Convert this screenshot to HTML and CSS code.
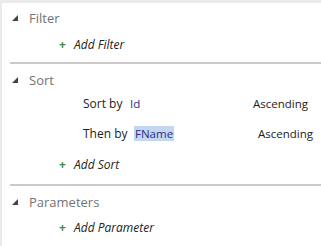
FILE: index.html
```html
<!DOCTYPE html>
<html>
<head>
<meta charset="utf-8">
<link rel="stylesheet" href="styles.css">
</head>
<body>
<div class="panel">
  <section class="section filter">
    <div class="header"><span class="tri"></span><span class="title">Filter</span></div>
    <div class="add"><span class="plus">+</span><span class="addtext">Add Filter</span></div>
  </section>
  <section class="section sort">
    <div class="header"><span class="tri"></span><span class="title">Sort</span></div>
    <div class="sortrow first"><span class="label">Sort by</span><span class="field">Id</span><span class="dir">Ascending</span></div>
    <div class="sortrow second"><span class="label">Then by</span><span class="field sel">FName</span><span class="dir">Ascending</span></div>
    <div class="add"><span class="plus">+</span><span class="addtext">Add Sort</span></div>
  </section>
  <section class="section params">
    <div class="header"><span class="tri"></span><span class="title">Parameters</span></div>
    <div class="add"><span class="plus">+</span><span class="addtext">Add Parameter</span></div>
  </section>
</div>
</body>
</html>
```
FILE: styles.css
```css
html, body {
  margin: 0;
  padding: 0;
  background: #ebebeb;
  width: 321px;
  height: 246px;
  overflow: hidden;
}
body {
  font-family: "Open Sans", "Noto Sans", sans-serif;
  color: #1e1e1e;
}
.panel {
  margin: 3px 0 0 2px;
  background: #fff;
  height: 243px;
}
.section {
  margin-left: 8px;
  border-bottom: 2px solid #cacaca;
}
.section.params { border-bottom: none; }
.header {
  display: flex;
  align-items: center;
  height: 30px;
}
.tri {
  width: 0;
  height: 0;
  border-left: 6px solid transparent;
  border-bottom: 6px solid #444;
  margin-left: 2px;
  margin-right: 11px;
}
.title {
  font-size: 13px;
  color: #737373;
}
.add {
  display: flex;
  align-items: center;
  height: 22px;
  padding-left: 49px;
}
.plus {
  color: #3d8a3d;
  font-weight: bold;
  font-size: 12px;
  width: 15px;
}
.addtext {
  font-style: italic;
  font-size: 12px;
  color: #222;
}
.sortrow {
  display: flex;
  align-items: center;
  height: 30px;
  font-size: 12px;
  padding-left: 73px;
}
.label { width: 46px; color: #222; }
.second .label { width: 51px; }
.field { color: #2b2b8c; font-size: 11.5px; padding: 0 1px; line-height: 15px; }
.field.sel { background: #c3d8ee; }
.dir { margin-left: auto; color: #222; font-size: 11.5px; }
.first .dir { margin-right: 13px; }
.second .dir { margin-right: 8px; }
.filter .header { height: 30px; }
.filter .add { margin-bottom: 7px; }
.sort .header { height: 32px; margin-bottom: -8px; }
.sort .add { height: 32px; margin-bottom: 4px; }
.params .header { height: 32px; }
.params .add { height: 18px; }
```
